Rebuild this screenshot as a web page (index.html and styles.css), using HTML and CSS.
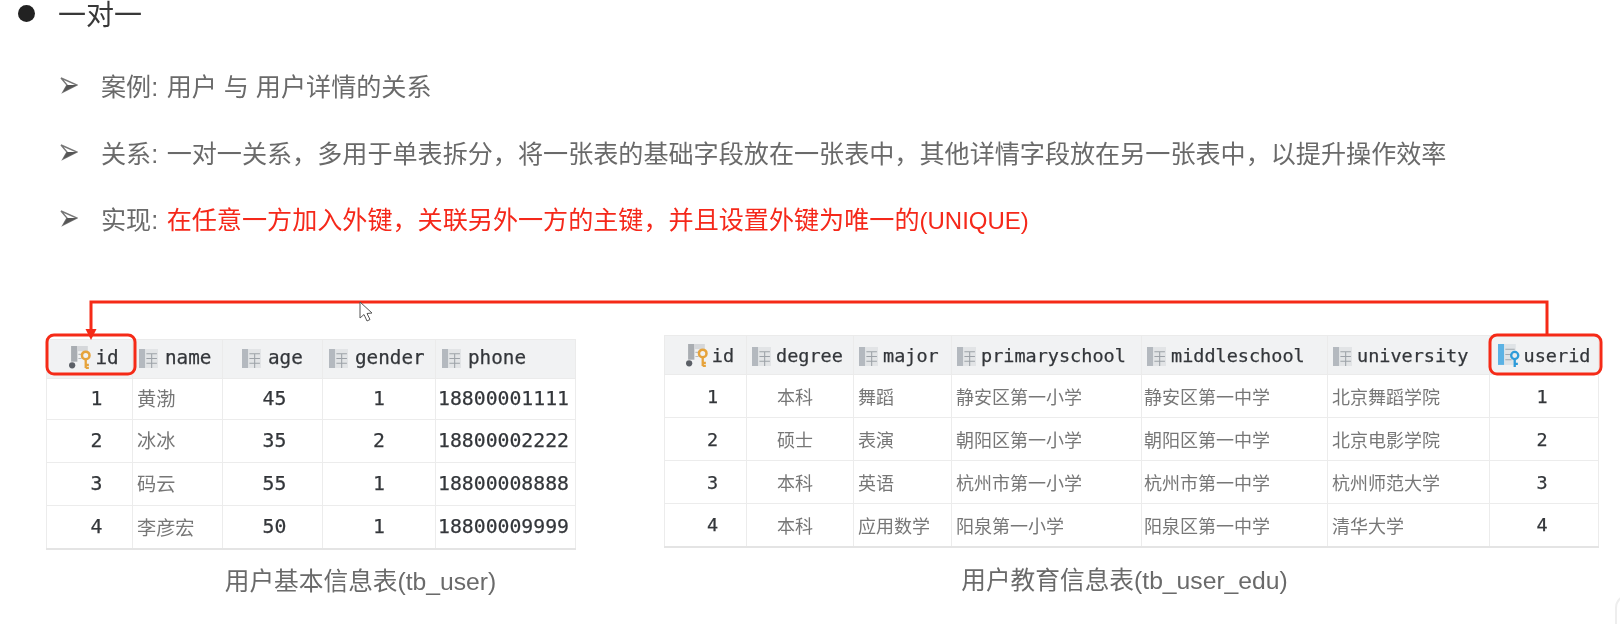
FILE: index.html
```html
<!DOCTYPE html>
<html lang="zh-CN">
<head>
<meta charset="utf-8">
<title>一对一</title>
<link rel="stylesheet" href="styles.css">
</head>
<body>
<main class="slide">
  <section class="notes">
    <h1 class="heading"><span class="dot"></span>一对一</h1>
    <ul class="points">
      <li class="point"><svg class="chev" viewBox="0 0 18 18"><path d="M1 2 L17 9 L3 16 L7 9 Z" fill="#fff" stroke="#777" stroke-width="1.4"/><path d="M7 9 L17 9 L3 16 Z" fill="#555"/></svg><span><span class="lab">案例:</span> 用户 与 用户详情的关系</span></li>
      <li class="point"><svg class="chev" viewBox="0 0 18 18"><path d="M1 2 L17 9 L3 16 L7 9 Z" fill="#fff" stroke="#777" stroke-width="1.4"/><path d="M7 9 L17 9 L3 16 Z" fill="#555"/></svg><span><span class="lab">关系:</span> 一对一关系，多用于单表拆分，将一张表的基础字段放在一张表中，其他详情字段放在另一张表中，以提升操作效率</span></li>
      <li class="point"><svg class="chev" viewBox="0 0 18 18"><path d="M1 2 L17 9 L3 16 L7 9 Z" fill="#fff" stroke="#777" stroke-width="1.4"/><path d="M7 9 L17 9 L3 16 Z" fill="#555"/></svg><span><span class="lab">实现:</span> <em class="hot">在任意一方加入外键，关联另外一方的主键，并且设置外键为唯一的<span class="latin">(UNIQUE)</span></em></span></li>
    </ul>
  </section>

  <section class="figure">
    <svg class="defs"><defs>
      <symbol id="col" viewBox="0 0 18 18">
        <rect x="0" y="0" width="6" height="18" fill="#b4b9bf"/>
        <rect x="6" y="0" width="12" height="18" fill="#e2e4e6"/>
        <path d="M7 4.5h10M7 9h10M7 13.500h10M12 4v14" stroke="#9da2a8" stroke-width="1" fill="none"/>
      </symbol>
      <symbol id="pk" viewBox="0 0 22 22">
        <rect x="2" y="0" width="6" height="15" fill="#a9adb2"/>
        <rect x="8" y="0" width="10" height="5" fill="#d5d7da"/>
        <path d="M9 8h3M9 12h3" stroke="#b8bbbf" stroke-width="1"/>
        <circle cx="3" cy="18.500" r="3" fill="#5b5f66"/>
        <circle cx="16" cy="9" r="3.600" fill="none" stroke="#e6a33c" stroke-width="2.400"/>
        <path d="M16 12v9M16 18h3M16 21h3" stroke="#e6a33c" stroke-width="2.200" fill="none"/>
      </symbol>
      <symbol id="fk" viewBox="0 0 22 22">
        <rect x="0" y="0" width="6" height="20" fill="#5bb2e4"/>
        <rect x="6" y="0" width="11" height="20" fill="#dfe3e6"/>
        <path d="M7 5h9M7 10h6M7 15h6" stroke="#a3a9ae" stroke-width="1"/>
        <circle cx="16" cy="11" r="3.400" fill="#e9ecee" stroke="#2e9bd9" stroke-width="2.200"/>
        <path d="M16 14v8M16 19h3" stroke="#2e9bd9" stroke-width="2.200" fill="none"/>
      </symbol>
    </defs></svg>

    <div class="block block-user">
      <table class="grid grid-user">
        <colgroup><col class="u1"><col class="u2"><col class="u3"><col class="u4"><col class="u5"></colgroup>
        <thead><tr>
          <th class="c first"><svg class="ico-key"><use href="#pk"/></svg>id</th>
          <th><svg class="ico"><use href="#col"/></svg>name</th>
          <th class="age"><svg class="ico"><use href="#col"/></svg>age</th>
          <th><svg class="ico"><use href="#col"/></svg>gender</th>
          <th><svg class="ico"><use href="#col"/></svg>phone</th>
        </tr></thead>
        <tbody>
          <tr><td class="c first">1</td><td class="t">黄渤</td><td class="c age-val">45</td><td class="c">1</td><td class="tel">18800001111</td></tr>
          <tr><td class="c first">2</td><td class="t">冰冰</td><td class="c age-val">35</td><td class="c">2</td><td class="tel">18800002222</td></tr>
          <tr><td class="c first">3</td><td class="t">码云</td><td class="c age-val">55</td><td class="c">1</td><td class="tel">18800008888</td></tr>
          <tr><td class="c first">4</td><td class="t">李彦宏</td><td class="c age-val">50</td><td class="c">1</td><td class="tel">18800009999</td></tr>
        </tbody>
      </table>
      <p class="caption">用户基本信息表(tb_user)</p>
    </div>

    <div class="block block-edu">
      <table class="grid grid-edu">
        <colgroup><col class="e1"><col class="e2"><col class="e3"><col class="e4"><col class="e5"><col class="e6"><col class="e7"></colgroup>
        <thead><tr>
          <th class="c first"><svg class="ico-key"><use href="#pk"/></svg>id</th>
          <th><svg class="ico"><use href="#col"/></svg>degree</th>
          <th><svg class="ico"><use href="#col"/></svg>major</th>
          <th><svg class="ico"><use href="#col"/></svg>primaryschool</th>
          <th><svg class="ico"><use href="#col"/></svg>middleschool</th>
          <th><svg class="ico"><use href="#col"/></svg>university</th>
          <th class="c"><svg class="ico-key"><use href="#fk"/></svg>userid</th>
        </tr></thead>
        <tbody>
          <tr><td class="c first">1</td><td class="c t deg">本科</td><td class="t">舞蹈</td><td class="t">静安区第一小学</td><td class="t mid">静安区第一中学</td><td class="t">北京舞蹈学院</td><td class="c last">1</td></tr>
          <tr><td class="c first">2</td><td class="c t deg">硕士</td><td class="t">表演</td><td class="t">朝阳区第一小学</td><td class="t mid">朝阳区第一中学</td><td class="t">北京电影学院</td><td class="c last">2</td></tr>
          <tr><td class="c first">3</td><td class="c t deg">本科</td><td class="t">英语</td><td class="t">杭州市第一小学</td><td class="t mid">杭州市第一中学</td><td class="t">杭州师范大学</td><td class="c last">3</td></tr>
          <tr><td class="c first">4</td><td class="c t deg">本科</td><td class="t">应用数学</td><td class="t">阳泉第一小学</td><td class="t mid">阳泉区第一中学</td><td class="t">清华大学</td><td class="c last">4</td></tr>
        </tbody>
      </table>
      <p class="caption">用户教育信息表(tb_user_edu)</p>
    </div>

    <svg class="link" viewBox="0 0 1620 624" aria-hidden="true">
      <path d="M1547 336 V302 H91 V330" fill="none" stroke="#f52a17" stroke-width="3"/>
      <path d="M85.500 329 H96.500 L91 340 Z" fill="#f52a17"/>
      <rect x="47" y="335" width="88" height="39" rx="7" fill="none" stroke="#f52a17" stroke-width="3"/>
      <rect x="1490" y="335" width="111" height="39" rx="7" fill="none" stroke="#f52a17" stroke-width="3"/>
      <path d="M360 302 L360 318 L364 314.500 L367 321 L370 319.500 L367 313.500 L372 313 Z" fill="#fff" stroke="#555" stroke-width="1"/>
    </svg>
    <div class="corner"></div>
  </section>
</main>
</body>
</html>
```
FILE: styles.css
```css
* { box-sizing: border-box; }
html, body { margin: 0; padding: 0; background: #fff; }
body { width: 1620px; height: 624px; overflow: hidden; font-family: "Liberation Sans", "Noto Sans CJK SC", sans-serif; }
.slide { position: relative; width: 1620px; height: 624px; overflow: hidden; filter: blur(0.6px); }

.notes { height: 335px; }
.heading { display: flex; align-items: center; margin: 0; height: 26px; font-size: 28px; font-weight: 400; color: #383838; }
.dot { width: 17px; height: 17px; margin: 0 23px 0 18px; border-radius: 50%; background: #222; }
.points { list-style: none; margin: 0; padding: 26px 0 0 60px; }
.point { display: flex; align-items: center; height: 66.500px; font-size: 25.100px; color: #6a6a6a; }
.chev { width: 18px; height: 18px; margin-right: 23px; flex: none; }
.lab { padding-right: 1.500px; }
.hot { font-style: normal; color: #f5281a; }
.latin { font-size: 24px; }

.figure { display: flex; align-items: flex-start; padding-left: 46px; }
.defs { position: absolute; width: 0; height: 0; }
.block-user { width: 529px; margin-top: 4px; margin-right: 89px; }
.block-edu { width: 934px; }

.grid { border-collapse: collapse; table-layout: fixed; width: 100%; font-family: "DejaVu Sans Mono", "Noto Sans CJK SC", monospace; color: #33363a; -webkit-text-stroke: 0.25px #33363a; border-bottom: 2px solid #e4e4e4; }
.grid th { height: 39px; padding: 0 0 0 5px; background: #f1f2f3; font-weight: 400; text-align: left; white-space: nowrap; border: 1px solid #ebebeb; }
.grid td { padding: 0 0 0 4px; border: 1px solid #ececec; white-space: nowrap; }
.grid-user { font-size: 19.300px; }
.grid-user th { padding: 0 0 3px 6px; }
.grid-user td { height: 43px; font-size: 19.800px; padding-bottom: 2px; }
.grid-user tr:first-child td { height: 41px; }
.grid-user tr:last-child td { padding-bottom: 0; }
.grid-edu { font-size: 18.500px; }
.grid-edu td { height: 43px; }
.grid th.c { text-align: center; padding-left: 0; }
.grid td.c { text-align: center; padding-left: 0; }
.grid th.first { padding-left: 9px; }
.grid td.first { padding-left: 14px; }
.grid td.t { color: #777; -webkit-text-stroke: 0; font-size: 18px; font-family: "Noto Sans CJK SC", sans-serif; }
.grid-user td.t { font-size: 19.200px; }
.grid td.deg { padding-right: 10px; }
.grid td.mid { padding-left: 2px; }
.grid td.last { padding-right: 4px; }
.grid td.tel { padding-left: 2px; }
.grid td.age-val { padding-left: 4px; }
.grid th.age { padding-left: 19px; }
.ico { width: 19px; height: 19px; margin-right: 5px; vertical-align: -4px; }
.grid-user .ico { margin-right: 7px; }
.ico-key { width: 23px; height: 23px; margin-right: 3px; vertical-align: -5px; }

.u1 { width: 86px; } .u2 { width: 90px; } .u3 { width: 100px; } .u4 { width: 113px; } .u5 { width: 140px; }
.e1 { width: 82px; } .e2 { width: 107px; } .e3 { width: 98px; } .e4 { width: 190px; } .e5 { width: 186px; } .e6 { width: 162px; } .e7 { width: 109px; }

.caption { margin: 11px 0 0; font-size: 24.700px; color: #6a6a6a; text-align: center; }
.block-user .caption { padding-left: 100px; }
.block-edu .caption { margin-top: 12px; padding-right: 13px; }

.link { position: absolute; left: 0; top: 0; width: 1620px; height: 624px; pointer-events: none; }
.corner { position: absolute; left: 1615px; top: 594px; width: 20px; height: 40px; border-left: 2px solid #eee; border-top: 2px solid #eee; border-top-left-radius: 14px; }
```
